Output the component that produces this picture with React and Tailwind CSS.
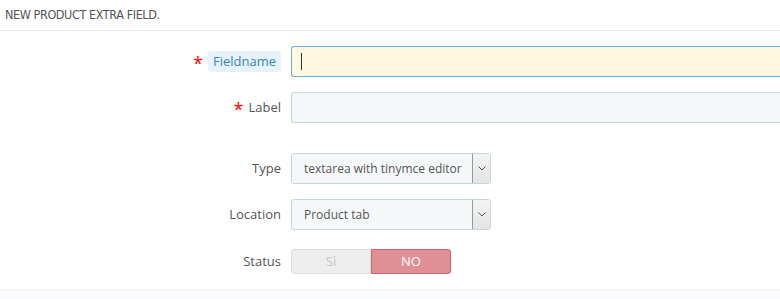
import React from "react";

function Row({ label, required, highlight, children, className }) {
  return (
    <div className={"flex items-center " + (className || "")}>
      <div className="flex w-[281px] shrink-0 items-center justify-end gap-[5px] text-[13px] text-[#555]">
        {required && <span className="relative top-[1px] text-[18px] leading-none text-[#f00]">*</span>}
        {highlight ? (
          <span className="rounded-[3px] bg-[#e7f2fa] px-[5px] py-[1px] text-[#3586ae]">{label}</span>
        ) : (
          <span>{label}</span>
        )}
      </div>
      <div className="ml-[10px] min-w-0 flex-1">{children}</div>
    </div>
  );
}

function Select({ value }) {
  return (
    <div className="flex h-[31px] w-[200px] overflow-hidden rounded-[3px] border border-[#c7d6db] bg-[#f5f8f9]">
      <div className="flex-1 whitespace-nowrap pl-[12px] text-[12px] leading-[29px] text-[#555]">{value}</div>
      <div className="flex w-[18px] items-center justify-center border-l border-[#999] bg-gradient-to-b from-[#f4f4f4] to-[#e4e4e4]">
        <svg width="8" height="5" viewBox="0 0 8 5">
          <path d="M0.5 0.5 L4 4 L7.5 0.5" fill="none" stroke="#555" strokeWidth="1" />
        </svg>
      </div>
    </div>
  );
}

export default function App() {
  return (
    <div className="h-[299px] w-[780px] overflow-hidden bg-white font-['Open_Sans',sans-serif]">
      <div className="h-[31px] border-b border-[#eee] pl-[5px] pt-[7px] font-['DejaVu_Sans_Condensed','DejaVu_Sans',sans-serif] text-[12.5px] uppercase leading-[16px] tracking-[-0.4px] text-[#555]">
        New product extra field.
      </div>

      <div className="pt-[15px]">
        <Row label="Fieldname" required highlight>
          <div className="flex h-[31px] items-center rounded-l-[3px] border border-r-0 border-[#66afe9] bg-[#fef8e0] pl-[9px]">
            <div className="h-[17px] w-px bg-[#333]" />
          </div>
        </Row>
        <Row label="Label" required className="mt-[15px]">
          <div className="h-[31px] rounded-l-[3px] border border-r-0 border-[#c7d6db] bg-[#f5f8f9]" />
        </Row>
        <Row label="Type" className="mt-[30px]">
          <Select value="textarea with tinymce editor" />
        </Row>
        <Row label="Location" className="mt-[15px]">
          <Select value="Product tab" />
        </Row>
        <Row label="Status" className="mt-[19px]">
          <div className="flex h-[25px] w-[160px] text-[13px]">
            <div className="flex w-[80px] items-center justify-center rounded-l-[3px] border border-[#ddd] bg-[#eee] text-[#c4c4c4]">
              Sì
            </div>
            <div className="flex w-[80px] items-center justify-center rounded-r-[3px] border border-[#c7666e] bg-[#e08f95] text-white">
              NO
            </div>
          </div>
        </Row>
      </div>

      <div className="mt-[15px] h-[20px] border-t border-[#eee] bg-[#fafbfc]" />
    </div>
  );
}
